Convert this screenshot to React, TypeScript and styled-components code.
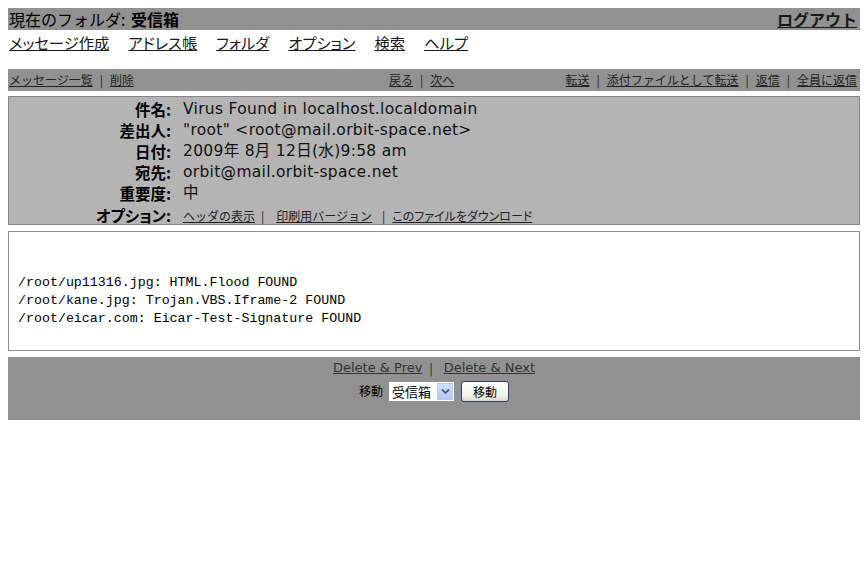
import React from 'react';
import styled, { createGlobalStyle } from 'styled-components';

const JP = '"Noto Sans CJK JP", sans-serif';
const LATIN = '"DejaVu Sans", "Noto Sans CJK JP", sans-serif';

const GlobalStyle = createGlobalStyle`
  body {
    margin: 8px;
    background: #ffffff;
    color: #000000;
    font-family: ${JP};
  }
`;

const navItems = ['メッセージ作成', 'アドレス帳', 'フォルダ', 'オプション', '検索', 'ヘルプ'];

const headerRows = [
  { label: '件名:', value: 'Virus Found in localhost.localdomain' },
  { label: '差出人:', value: '"root" <root@mail.orbit-space.net>' },
  { label: '日付:', value: '2009年 8月 12日(水)9:58 am' },
  { label: '宛先:', value: 'orbit@mail.orbit-space.net' },
  { label: '重要度:', value: '中' },
];

const bodyLines = [
  '/root/up11316.jpg: HTML.Flood FOUND',
  '/root/kane.jpg: Trojan.VBS.Iframe-2 FOUND',
  '/root/eicar.com: Eicar-Test-Signature FOUND',
];

export default function App() {
  return (
    <>
      <GlobalStyle />
      <Page>
        <TitleBar>
          <span>
            現在のフォルダ: <strong>受信箱</strong>
          </span>
          <Logout href="#">ログアウト</Logout>
        </TitleBar>

        <NavRow>
          {navItems.map(item => (
            <NavLink key={item} href="#">
              {item}
            </NavLink>
          ))}
        </NavRow>

        <Toolbar>
          <ToolGroup>
            <SmallLink href="#">メッセージ一覧</SmallLink>
            <Bar>|</Bar>
            <SmallLink href="#">削除</SmallLink>
          </ToolGroup>
          <ToolGroup>
            <SmallLink href="#">戻る</SmallLink>
            <Bar>|</Bar>
            <SmallLink href="#">次へ</SmallLink>
          </ToolGroup>
          <ToolGroup $align="end">
            <SmallLink href="#">転送</SmallLink>
            <Bar>|</Bar>
            <SmallLink href="#">添付ファイルとして転送</SmallLink>
            <Bar>|</Bar>
            <SmallLink href="#">返信</SmallLink>
            <Bar>|</Bar>
            <SmallLink href="#">全員に返信</SmallLink>
          </ToolGroup>
        </Toolbar>

        <HeaderBox>
          {headerRows.map(row => (
            <HeaderRow key={row.label}>
              <Label>{row.label}</Label>
              <Value>{row.value}</Value>
            </HeaderRow>
          ))}
          <HeaderRow $last>
            <Label>オプション:</Label>
            <Options>
              <SmallLink href="#">ヘッダの表示</SmallLink>
              <Bar $before={6} $after={12}>|</Bar>
              <SmallLink href="#">印刷用バージョン</SmallLink>
              <Bar $before={10} $after={7}>|</Bar>
              <SmallLink href="#" $tight>このファイルをダウンロード</SmallLink>
            </Options>
          </HeaderRow>
        </HeaderBox>

        <BodyBox>
          {bodyLines.map(line => (
            <BodyLine key={line}>{line}</BodyLine>
          ))}
        </BodyBox>

        <BottomBar>
          <BottomLinks>
            <LatinLink href="#">Delete &amp; Prev</LatinLink>
            <Bar $before={7} $after={11}>|</Bar>
            <LatinLink href="#">Delete &amp; Next</LatinLink>
          </BottomLinks>
          <MoveRow>
            <MoveLabel>移動</MoveLabel>
            <SelectWrap>
              <FolderSelect defaultValue="inbox">
                <option value="inbox">受信箱</option>
              </FolderSelect>
              <SelectArrow>
                <svg width="9" height="7" viewBox="0 0 9 7">
                  <path d="M1 1.5 L4.5 5 L8 1.5" fill="none" stroke="#4d6185" strokeWidth="1.8" />
                </svg>
              </SelectArrow>
            </SelectWrap>
            <MoveButton type="button">移動</MoveButton>
          </MoveRow>
        </BottomBar>
      </Page>
    </>
  );
}

const Page = styled.div`
  width: 852px;
  display: flex;
  flex-direction: column;
`;

const TitleBar = styled.div`
  height: 22px;
  background: #919191;
  display: flex;
  align-items: center;
  justify-content: space-between;
  padding: 0 3px 0 1px;
  font-size: 16px;
  line-height: 22px;

  strong {
    font-weight: bold;
    margin-left: 2px;
  }
`;

const Logout = styled.a`
  color: #1a1a1a;
  font-weight: bold;
  text-decoration: underline;
`;

const NavRow = styled.div`
  height: 24px;
  display: flex;
  align-items: center;
  gap: 19px;
  padding-left: 1px;
  margin-bottom: 15px;
`;

const NavLink = styled.a`
  color: #1a1a1a;
  font-size: 15.3px;
  font-feature-settings: 'palt';
  text-decoration: underline;
`;

const Toolbar = styled.div`
  height: 22px;
  background: #919191;
  display: grid;
  grid-template-columns: 380px auto 1fr;
  align-items: center;
  padding: 0 3px 0 1px;
`;

const ToolGroup = styled.div<{ $align?: 'end' }>`
  display: flex;
  align-items: center;
  justify-content: ${p => (p.$align === 'end' ? 'flex-end' : 'flex-start')};
`;

const SmallLink = styled.a<{ $tight?: boolean }>`
  color: #222222;
  font-size: 12px;
  line-height: 16px;
  font-feature-settings: ${p => (p.$tight ? "'palt'" : 'normal')};
  text-decoration: underline;
`;

const Bar = styled.span<{ $before?: number; $after?: number }>`
  color: #222222;
  font-size: 12px;
  line-height: 16px;
  padding-left: ${p => p.$before ?? 7}px;
  padding-right: ${p => p.$after ?? 7}px;
`;

const HeaderBox = styled.div`
  margin-top: 5px;
  height: 129px;
  box-sizing: border-box;
  background: #b4b4b4;
  border: 1px solid #858585;
  padding-top: 2px;
`;

const HeaderRow = styled.div<{ $last?: boolean }>`
  display: grid;
  grid-template-columns: 162px 1fr;
  column-gap: 12px;
  align-items: center;
  height: ${p => (p.$last ? '22px' : '21px')};
  line-height: 21px;
`;

const Label = styled.div`
  text-align: right;
  font-family: ${JP};
  font-weight: bold;
  font-size: 15.5px;
  font-feature-settings: 'palt';
`;

const Value = styled.div`
  font-family: ${LATIN};
  font-size: 15.5px;
  letter-spacing: 0.3px;
  color: #111111;
`;

const Options = styled.div`
  display: flex;
  align-items: center;
  padding-top: 2px;
`;

const BodyBox = styled.div`
  margin-top: 6px;
  height: 120px;
  box-sizing: border-box;
  background: #ffffff;
  border: 1px solid #8e8e8e;
  padding: 42px 9px 0;
`;

const BodyLine = styled.div`
  font-family: 'Liberation Mono', monospace;
  font-size: 13.3px;
  line-height: 18px;
  white-space: pre;
`;

const BottomBar = styled.div`
  margin-top: 6px;
  height: 63px;
  background: #919191;
  display: flex;
  flex-direction: column;
  align-items: center;
`;

const BottomLinks = styled.div`
  height: 21px;
  display: flex;
  align-items: center;
`;

const LatinLink = styled.a`
  font-family: ${LATIN};
  font-size: 13px;
  color: #333333;
  text-decoration: underline;
`;

const MoveRow = styled.div`
  margin-top: 2px;
  height: 22px;
  display: flex;
  align-items: center;
`;

const MoveLabel = styled.span`
  font-size: 12px;
  line-height: 16px;
  margin-right: 6px;
`;

const SelectWrap = styled.div`
  position: relative;
  width: 65px;
  height: 19px;
  margin-right: 7px;
`;

const FolderSelect = styled.select`
  appearance: none;
  display: block;
  box-sizing: border-box;
  width: 100%;
  height: 19px;
  border: none;
  background: #ffffff;
  font-family: ${JP};
  font-size: 13px;
  line-height: 19px;
  padding: 0 0 0 3px;
  margin: 0;
  color: #000000;
`;

const SelectArrow = styled.span`
  position: absolute;
  right: 1px;
  top: 1px;
  width: 16px;
  height: 17px;
  background: linear-gradient(#d4e1fb, #b3c8f2);
  border: 1px solid #b8c9ee;
  box-sizing: border-box;
  display: flex;
  align-items: center;
  justify-content: center;
  pointer-events: none;
`;

const MoveButton = styled.button`
  width: 48px;
  height: 21px;
  padding: 0;
  border: 1px solid #2d3f63;
  border-radius: 3px;
  background: linear-gradient(#ffffff, #f3f2ec 70%, #dcd9cd);
  font-family: ${JP};
  font-size: 12px;
  line-height: 19px;
  color: #000000;
`;
